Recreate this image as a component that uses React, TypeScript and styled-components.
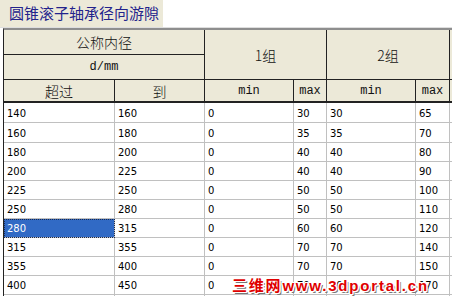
import React from 'react';
import styled, { createGlobalStyle } from 'styled-components';

const GlobalStyle = createGlobalStyle`
    html, body {
        margin: 0;
        padding: 0;
        background: #fff;
        overflow: hidden;
    }
    #root {
        width: 452px;
        height: 296px;
        overflow: hidden;
    }
`;

const Page = styled.div`
    position: relative;
    width: 452px;
    height: 296px;
    overflow: hidden;
    background: #fff;
`;

const TitleBar = styled.div`
    display: flex;
    height: 27px;
    border-bottom: 1px solid #dedede;
`;

const TitleTab = styled.div`
    width: 163px;
    display: flex;
    align-items: center;
    padding: 0 0 2px 9px;
    box-sizing: border-box;
    background: #ece9d8;
    color: #23238c;
    font-family: 'Noto Sans CJK SC', sans-serif;
    font-size: 15px;
    white-space: nowrap;
`;

const Sheet = styled.div`
    display: grid;
    grid-template-columns: 111px 90px 89px 33px 89px 34px 10px;
    grid-template-rows: 25px 25px 23px 20px 20px repeat(9, 19px);
    margin-left: 3px;
    border-top: 2px solid #8e8e8e;
    border-left: 1px solid #222;
`;

const HeadCell = styled.div<{ $col: string; $row: string; $mono?: boolean; $last?: boolean }>`
    grid-column: ${(p) => p.$col};
    grid-row: ${(p) => p.$row};
    display: flex;
    align-items: center;
    justify-content: center;
    box-sizing: border-box;
    background: #ece9d8;
    border-right: 1px solid #222;
    border-bottom: ${(p) => (p.$last ? '2px' : '1px')} solid #222;
    color: #111;
    font-family: ${(p) => (p.$mono ? "'Liberation Mono', monospace" : "'Noto Sans CJK SC', sans-serif")};
    font-size: ${(p) => (p.$mono ? '12px' : '14px')};
    font-weight: ${(p) => (p.$mono ? 400 : 300)};
    white-space: nowrap;
`;

const DataCell = styled.div<{ $selected?: boolean }>`
    display: flex;
    align-items: flex-end;
    padding: 0 0 2px 3px;
    box-sizing: border-box;
    border-right: 1px solid #c0c0c0;
    border-bottom: 1px solid #c0c0c0;
    background: ${(p) => (p.$selected ? '#316ac5' : '#fff')};
    outline: ${(p) => (p.$selected ? '1px dotted #1a2a50' : 'none')};
    outline-offset: -1px;
    color: ${(p) => (p.$selected ? '#fff' : '#000')};
    font-family: 'DejaVu Sans', sans-serif;
    font-size: 10px;
    line-height: 12px;
`;

const Watermark = styled.div`
    position: absolute;
    left: 232px;
    top: 274px;
    color: #e00000;
    font-family: 'Liberation Sans', 'Noto Sans CJK SC', sans-serif;
    font-weight: bold;
    font-size: 15px;
    letter-spacing: 1.8px;
    white-space: nowrap;
    text-shadow: 1px 0 #fff, -1px 0 #fff, 0 1px #fff, 0 -1px #fff, 1px 1px #fff, -1px -1px #fff, 1px -1px #fff,
        -1px 1px #fff, 2px 2px #777;
`;

const rows = [
    ['140', '160', '0', '30', '30', '65'],
    ['160', '180', '0', '35', '35', '70'],
    ['180', '200', '0', '40', '40', '80'],
    ['200', '225', '0', '40', '40', '90'],
    ['225', '250', '0', '50', '50', '100'],
    ['250', '280', '0', '50', '50', '110'],
    ['280', '315', '0', '60', '60', '120'],
    ['315', '355', '0', '70', '70', '140'],
    ['355', '400', '0', '70', '70', '150'],
    ['400', '450', '0', '70', '70', '170'],
    ['', '', '', '', '', ''],
];

export default function App() {
    return (
        <Page>
            <GlobalStyle />
            <TitleBar>
                <TitleTab>圆锥滚子轴承径向游隙</TitleTab>
            </TitleBar>
            <Sheet>
                <HeadCell $col="1 / 3" $row="1">公称内径</HeadCell>
                <HeadCell $col="1 / 3" $row="2" $mono>d/mm</HeadCell>
                <HeadCell $col="3 / 5" $row="1 / 3">1组</HeadCell>
                <HeadCell $col="5 / 7" $row="1 / 3">2组</HeadCell>
                <HeadCell $col="7" $row="1 / 3" />
                <HeadCell $col="1" $row="3" $last>超过</HeadCell>
                <HeadCell $col="2" $row="3" $last>到</HeadCell>
                <HeadCell $col="3" $row="3" $last $mono>min</HeadCell>
                <HeadCell $col="4" $row="3" $last $mono>max</HeadCell>
                <HeadCell $col="5" $row="3" $last $mono>min</HeadCell>
                <HeadCell $col="6" $row="3" $last $mono>max</HeadCell>
                <HeadCell $col="7" $row="3" $last />
                {rows.map((r, i) => (
                    <React.Fragment key={i}>
                        {r.map((v, j) => (
                            <DataCell key={j} $selected={i === 6 && j === 0}>
                                {v}
                            </DataCell>
                        ))}
                        <DataCell />
                    </React.Fragment>
                ))}
            </Sheet>
            <Watermark>三维网www.3dportal.cn</Watermark>
        </Page>
    );
}
